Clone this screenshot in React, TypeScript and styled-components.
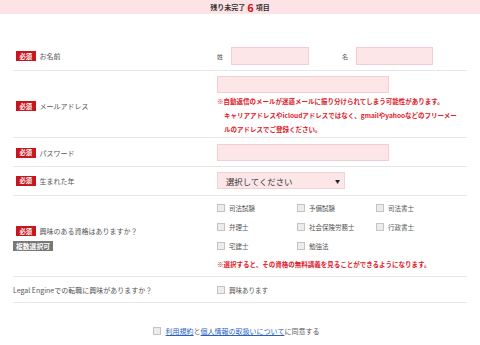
import React from "react";
import styled, { createGlobalStyle } from "styled-components";

const GlobalStyle = createGlobalStyle`
    body {
        margin: 0;
        background: #fff;
        font-family: "Noto Sans CJK JP", "Liberation Sans", sans-serif;
        color: #444;
    }
`;

const TopBar = styled.div`
    height: 14px;
    background: #fde3e6;
    display: flex;
    align-items: center;
    justify-content: center;
    font-size: 7px;
    font-weight: bold;
    color: #333;
`;

const Count = styled.span`
    font-size: 11px;
    color: #d0121b;
    margin: 0 2px;
    line-height: 1;
`;

const Form = styled.div`
    margin: 28px 13px 0;
`;

const Row = styled.div<{ $pad: string; $min?: number }>`
    display: flex;
    padding: ${(p) => p.$pad};
    min-height: ${(p) => (p.$min ? `${p.$min}px` : "auto")};
    border-bottom: 1px solid #e6e6e6;
    box-sizing: border-box;
`;

const LabelCol = styled.div<{ $top?: number }>`
    width: 204px;
    flex-shrink: 0;
    display: flex;
    flex-direction: column;
    justify-content: center;
    align-items: flex-start;
    gap: 5px;
    padding-top: ${(p) => p.$top ?? 0}px;
`;

const Label = styled.div`
    display: flex;
    align-items: center;
    font-size: 7px;
    color: #555;
    white-space: nowrap;
`;

const Badge = styled.span<{ $gray?: boolean }>`
    display: inline-flex;
    align-items: center;
    justify-content: center;
    height: 10px;
    padding: 0 ${(p) => (p.$gray ? "3px" : "3.5px")};
    margin-left: ${(p) => (p.$gray ? "0" : "3px")};
    margin-right: ${(p) => (p.$gray ? "0" : "4px")};
    background: ${(p) => (p.$gray ? "#777" : "#c8161d")};
    color: #fff;
    font-size: ${(p) => (p.$gray ? "6.8px" : "6.3px")};
    font-weight: bold;
`;

const FieldCol = styled.div`
    flex: 1;
    display: flex;
    flex-direction: column;
    justify-content: center;
`;

const NameLine = styled.div`
    display: flex;
    align-items: center;
`;

const Small = styled.span<{ $w: number; $right?: boolean }>`
    width: ${(p) => p.$w}px;
    box-sizing: border-box;
    text-align: ${(p) => (p.$right ? "right" : "left")};
    padding-right: ${(p) => (p.$right ? "8px" : "0")};
    font-size: 6px;
    color: #555;
`;

const Input = styled.div<{ $w: number; $h?: number }>`
    width: ${(p) => p.$w}px;
    height: ${(p) => p.$h ?? 17}px;
    box-sizing: border-box;
    background: #fde6e8;
    border: 1px solid #f4cdd0;
`;

const Note = styled.div<{ $lh: number; $mt?: number }>`
    font-size: 6.5px;
    font-weight: bold;
    color: #e0202a;
    line-height: ${(p) => p.$lh}px;
    margin-top: ${(p) => p.$mt ?? 0}px;
    padding-left: 7px;
    text-indent: -7px;
    white-space: nowrap;
`;

const Select = styled.div`
    width: 128px;
    height: 17px;
    box-sizing: border-box;
    background: #fde6e8;
    border: 1px solid #f1d3d5;
    display: flex;
    align-items: center;
    justify-content: space-between;
    padding: 0 4px 0 8px;
    font-size: 8.4px;
    color: #333;
`;

const Arrow = styled.span`
    font-size: 5px;
    color: #222;
`;

const CheckGrid = styled.div`
    display: grid;
    grid-template-columns: 80px 79px 80px;
    grid-auto-rows: 19px;
`;

const Check = styled.label`
    display: flex;
    align-items: center;
    font-size: 6.5px;
    color: #555;
    white-space: nowrap;
`;

const Box = styled.span<{ $gap?: number }>`
    width: 8px;
    height: 8px;
    box-sizing: border-box;
    background: #ececec;
    border: 1px solid #c4c4c4;
    margin-right: ${(p) => p.$gap ?? 4}px;
    flex-shrink: 0;
`;

const Agree = styled.div`
    display: flex;
    justify-content: center;
    align-items: center;
    margin-top: 23px;
    padding-right: 8px;
    font-size: 7px;
    color: #555;
    line-height: 10px;
`;

const Link = styled.a`
    color: #2a5fc0;
    text-decoration: underline;
`;

const quals = [
    "司法試験",
    "予備試験",
    "司法書士",
    "弁理士",
    "社会保険労務士",
    "行政書士",
    "宅建士",
    "勉強法",
];

const App = () => {
    return (
        <>
            <GlobalStyle />
            <TopBar>
                残り未完了<Count>6</Count>項目
            </TopBar>
            <Form>
                <Row $pad="5px 0">
                    <LabelCol>
                        <Label>
                            <Badge>必須</Badge>お名前
                        </Label>
                    </LabelCol>
                    <FieldCol>
                        <NameLine>
                            <Small $w={14}>姓</Small>
                            <Input $w={78} $h={18} />
                            <Small $w={47} $right>
                                名
                            </Small>
                            <Input $w={77} $h={18} />
                        </NameLine>
                    </FieldCol>
                </Row>
                <Row $pad="5px 0 1px">
                    <LabelCol>
                        <Label>
                            <Badge>必須</Badge>メールアドレス
                        </Label>
                    </LabelCol>
                    <FieldCol>
                        <Input $w={172} />
                        <Note $lh={14} $mt={1}>
                            ※自動返信のメールが迷惑メールに振り分けられてしまう可能性があります。
                            <br />
                            キャリアアドレスやicloudアドレスではなく、gmailやyahooなどのフリーメー
                            <br />
                            ルのアドレスでご登録ください。
                        </Note>
                    </FieldCol>
                </Row>
                <Row $pad="6px 0 5px">
                    <LabelCol>
                        <Label>
                            <Badge>必須</Badge>パスワード
                        </Label>
                    </LabelCol>
                    <FieldCol>
                        <Input $w={172} />
                    </FieldCol>
                </Row>
                <Row $pad="5px 0 6px">
                    <LabelCol>
                        <Label>
                            <Badge>必須</Badge>生まれた年
                        </Label>
                    </LabelCol>
                    <FieldCol>
                        <Select>
                            選択してください<Arrow>▼</Arrow>
                        </Select>
                    </FieldCol>
                </Row>
                <Row $pad="2px 0 3px">
                    <LabelCol $top={6}>
                        <Label>
                            <Badge>必須</Badge>興味のある資格はありますか？
                        </Label>
                        <Badge $gray>複数選択可</Badge>
                    </LabelCol>
                    <FieldCol>
                        <CheckGrid>
                            {quals.map((q) => (
                                <Check key={q}>
                                    <Box />
                                    {q}
                                </Check>
                            ))}
                        </CheckGrid>
                        <Note $lh={18}>
                            ※選択すると、その資格の無料講義を見ることができるようになります。
                        </Note>
                    </FieldCol>
                </Row>
                <Row $pad="0" $min={26}>
                    <LabelCol>
                        <Label>Legal Engineでの転職に興味がありますか？</Label>
                    </LabelCol>
                    <FieldCol>
                        <Check>
                            <Box />
                            興味あります
                        </Check>
                    </FieldCol>
                </Row>
            </Form>
            <Agree>
                <Box $gap={5} />
                <Link>利用規約</Link>と<Link>個人情報の取扱いについて</Link>に同意する
            </Agree>
        </>
    );
};

export default App;
